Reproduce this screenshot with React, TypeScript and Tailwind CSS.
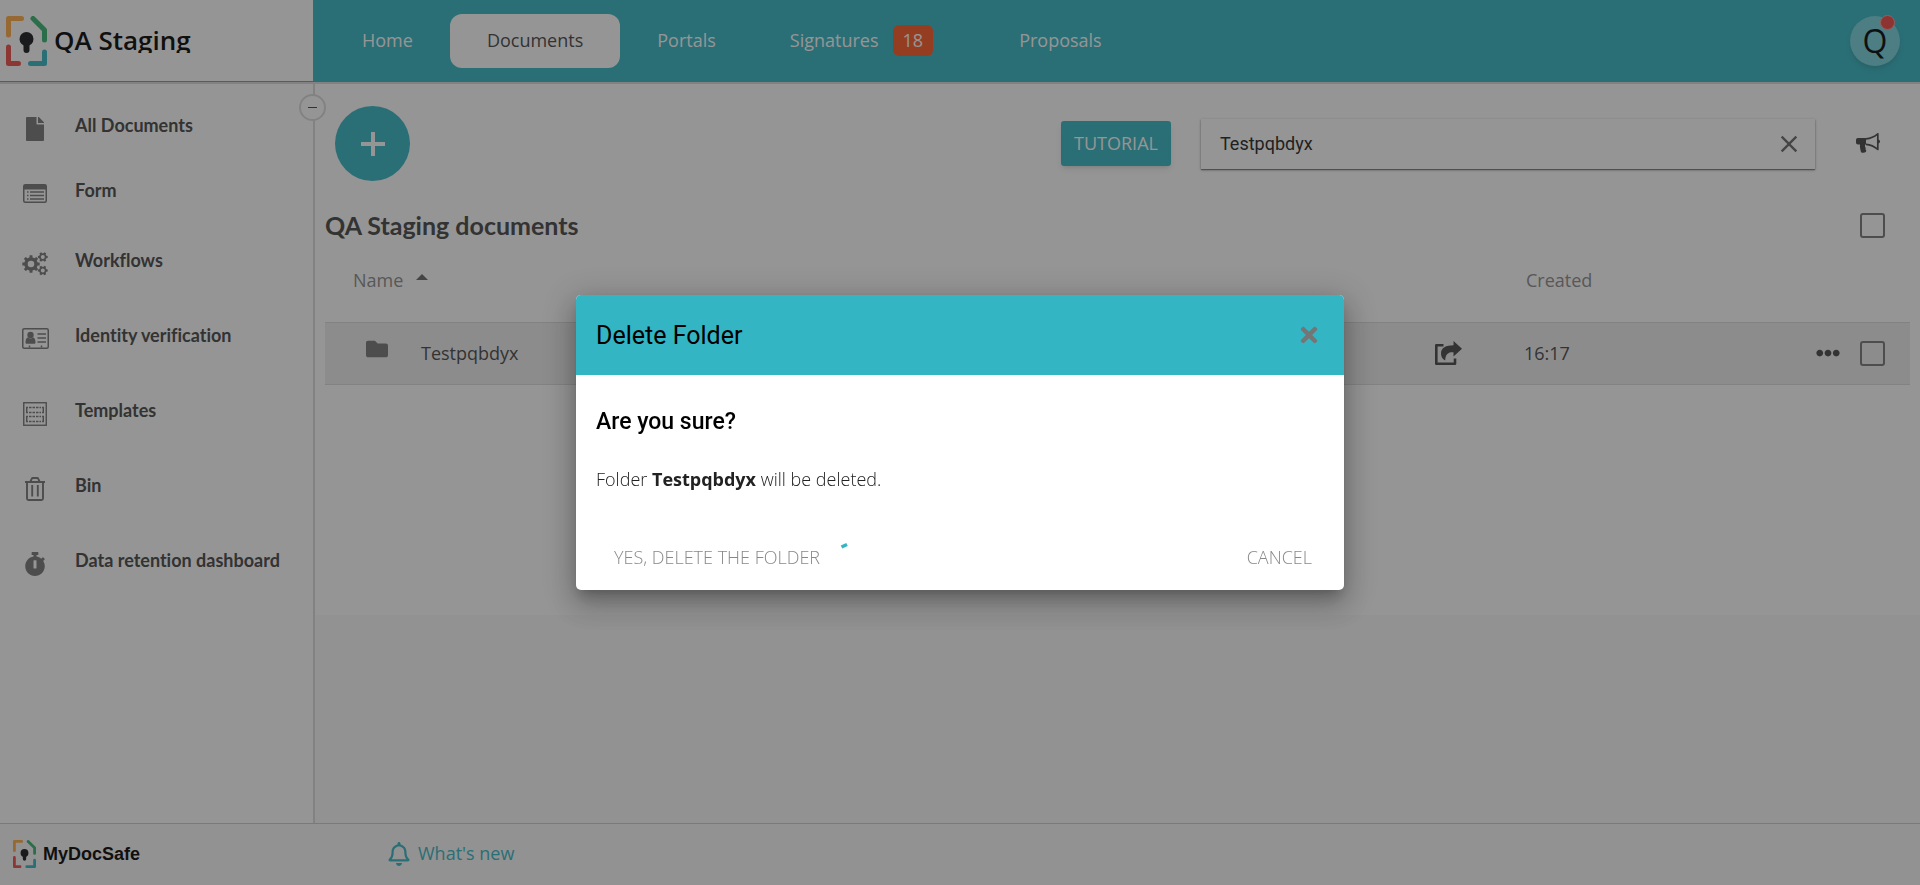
import type { ReactNode } from "react";
import {
  FaEllipsisH,
  FaFile,
  FaFolder,
  FaRegBell,
  FaStopwatch,
  FaTimes,
} from "react-icons/fa";
import { MdClose } from "react-icons/md";

function LogoMark({ className }: { className: string }) {
  return (
    <svg viewBox="0 0 41 50" className={className} fill="none" strokeWidth="5" strokeLinecap="round" strokeLinejoin="round" aria-hidden="true">
      <path d="M2.500 19V2.500H15.500" stroke="#ffab40" />
      <path d="M27 2.500L38.500 14V24" stroke="#36b36f" />
      <path d="M2.500 31V47.500H12.500" stroke="#ef4b46" />
      <path d="M38.500 36V47.500H24.500" stroke="#33b5c3" />
      <circle cx="20.500" cy="23" r="7" fill="#16161c" />
      <path d="M20.500 26V34" stroke="#16161c" strokeWidth="6" />
    </svg>
  );
}

function FormIcon() {
  return (
    <svg viewBox="0 0 24 19" className="w-6" aria-hidden="true">
      <rect x="0.750" y="0.750" width="22.500" height="17.500" rx="1.500" fill="none" stroke="currentColor" strokeWidth="1.500" />
      <path d="M1 1h22v4.500H1z" fill="currentColor" />
      <path d="M4 8h1.500M4 11.500h1.500M4 15h1.500M7 8h14M7 11.500h14M7 15h14" stroke="currentColor" strokeWidth="1.300" />
    </svg>
  );
}

function gearPath(cx: number, cy: number, outer: number, root: number, hole: number, teeth: number) {
  const step = (Math.PI * 2) / teeth;
  const points: string[] = [];
  for (let i = 0; i < teeth; i++) {
    const a = i * step;
    [
      [root, -0.3],
      [outer, -0.2],
      [outer, 0.2],
      [root, 0.3],
    ].forEach(([r, t]) => {
      points.push(`${(cx + r * Math.cos(a + t * step)).toFixed(2)} ${(cy + r * Math.sin(a + t * step)).toFixed(2)}`);
    });
  }
  return `M${points.join("L")}ZM${cx - hole} ${cy}a${hole} ${hole} 0 1 0 ${hole * 2} 0a${hole} ${hole} 0 1 0 ${-hole * 2} 0Z`;
}

function WorkflowsIcon() {
  return (
    <svg viewBox="0 0 26 24" className="w-[26px]" fill="currentColor" fillRule="evenodd" aria-hidden="true">
      <path d={gearPath(9, 12, 8.8, 6.8, 3.3, 8)} />
      <path d={gearPath(20.8, 5, 5, 3.8, 2, 6)} />
      <path d={gearPath(20.8, 18.5, 5, 3.8, 2, 6)} />
    </svg>
  );
}

function IdentityIcon() {
  return (
    <svg viewBox="0 0 27 21" className="w-[27px]" aria-hidden="true">
      <rect x="0.750" y="0.750" width="25.500" height="19.500" rx="1.500" fill="none" stroke="currentColor" strokeWidth="1.500" />
      <circle cx="8.500" cy="7" r="3.200" fill="currentColor" />
      <path d="M3.500 14.500c0-3 1-5 2.500-5 1.500 1.200 3.500 1.200 5 0 1.500 0 2.500 2 2.500 5 0 .8-.6 1.300-1.300 1.300H4.800c-.7 0-1.300-.5-1.300-1.300z" fill="currentColor" />
      <path d="M15.500 6h8.500M15.500 10h8.500M15.500 14h8.500" stroke="currentColor" strokeWidth="1.500" />
      <path d="M7.500 17.500v2M19.500 17.500v2" stroke="currentColor" strokeWidth="1.500" />
    </svg>
  );
}

function TemplatesIcon() {
  return (
    <svg viewBox="0 0 24 24" className="w-6" fill="none" stroke="currentColor" aria-hidden="true">
      <rect x="0.750" y="0.750" width="22.500" height="22.500" strokeWidth="1.400" />
      <path d="M5 5.500H3.700v5H5M19 5.500h1.300v5H19M5 14.500H3.700v5H5M19 14.500h1.300v5H19" strokeWidth="1.400" />
      <path d="M6 5.500h12M6 10.500h12M6 14.500h12M6 19.500h12" strokeWidth="1.400" strokeDasharray="2.500 1" />
    </svg>
  );
}

function BinIcon() {
  return (
    <svg viewBox="0 0 20 24" className="w-5" fill="none" stroke="currentColor" strokeWidth="1.900" aria-hidden="true">
      <path d="M0 5h20M2 5v16.500c0 1 .6 1.500 1.500 1.500h13c.9 0 1.500-.5 1.500-1.500V5" />
      <path d="M5.500 4.500l1.300-2.800c.2-.5.6-.7 1-.7h4.400c.4 0 .8.200 1 .7l1.300 2.800" />
      <path d="M7.200 8v11.500M12.800 8v11.500" />
    </svg>
  );
}

function MegaphoneIcon() {
  return (
    <svg viewBox="0 0 24 21" className="w-6" aria-hidden="true">
      <path d="M2 5h8v6.500h-.8c-.4 1.500-.2 2.600.6 3.500-.5.700-.3 1.500.2 2 .4.600.3 1.200-.3 2-.9.900-3.300 1-4.700.2-.5-2.700-1.400-5-1-7.700H2c-1.200 0-2-.8-2-2V7c0-1.200.8-2 2-2z" fill="currentColor" />
      <path d="M10 5.800c4.500-.4 8.500-2.200 11.800-5v15.600c-3.300-2.800-7.300-4.600-11.800-5" fill="none" stroke="currentColor" strokeWidth="1.700" strokeLinejoin="round" />
      <path d="M22 6.500c1.300.3 2 1 2 2s-.7 1.700-2 2z" fill="currentColor" />
    </svg>
  );
}

function ShareIcon() {
  return (
    <svg viewBox="0 0 27 24" className="w-[27px]" aria-hidden="true">
      <path d="M8.500 4.300H1.300V22.700H20V17.500" fill="none" stroke="currentColor" strokeWidth="2.600" strokeLinejoin="round" />
      <path d="M18.500 0L27 7.700L18.500 15.500V11.200C13.500 11 10.500 12.500 10.200 19.500C7.500 18.200 6 15.500 6 12.500C6 6.500 11 4.300 18.500 4.200Z" fill="currentColor" />
    </svg>
  );
}

const sideItems: { label: string; icon: ReactNode; height: string }[] = [
  { label: "All Documents", icon: <FaFile size={24} />, height: "h-[65px]" },
  { label: "Form", icon: <FormIcon />, height: "h-[65px]" },
  { label: "Workflows", icon: <WorkflowsIcon />, height: "h-[75px]" },
  { label: "Identity verification", icon: <IdentityIcon />, height: "h-[75px]" },
  { label: "Templates", icon: <TemplatesIcon />, height: "h-[75px]" },
  { label: "Bin", icon: <BinIcon />, height: "h-[75px]" },
  { label: "Data retention dashboard", icon: <FaStopwatch size={24} />, height: "h-[75px]" },
];

const navItem = "flex h-[54px] items-center gap-[14px] rounded-xl px-[37px] pb-0.5";
const checkbox = "block size-[25px] appearance-none rounded-[3px] border-2 border-[#757575]";

function Header() {
  return (
    <header className="flex h-[84px] border-b-2 border-[#dbdbdb]">
      <a href="#home" className="flex w-[313px] shrink-0 items-center gap-[7px] border-b border-[#33b5c3] bg-white pl-1.5">
        <LogoMark className="w-[41px]" />
        <span className="h-6 overflow-hidden text-[26px] leading-[22px] font-semibold text-black">QA Staging</span>
      </a>
      <div className="flex grow items-center justify-between bg-[#33b5c3] pr-5 pl-3">
        <nav className="flex items-center text-white">
          <a href="#home" className={navItem}>Home</a>
          <a href="#documents" className={`${navItem} bg-white text-[#444]`}>Documents</a>
          <a href="#portals" className={navItem}>Portals</a>
          <a href="#signatures" className={navItem}>
            Signatures
            <span className="mr-3 rounded-md bg-[#ff5722] px-2.5 py-0.5">18</span>
          </a>
          <a href="#proposals" className={navItem}>Proposals</a>
        </nav>
        <button type="button" aria-label="Account" className="relative flex size-[50px] items-center justify-center rounded-full bg-[#75d3dc] text-[32px] leading-none text-black shadow-md">
          Q
          <span className="absolute -top-px right-[5px] size-[15px] rounded-full border border-[#ff9a94] bg-[#f04440]" />
        </button>
      </div>
    </header>
  );
}

function Sidebar() {
  return (
    <aside className="relative w-[315px] shrink-0 border-r-2 border-[#dbdbdb] bg-white pt-[9px]">
      <button type="button" aria-label="Collapse menu" className="absolute top-[10px] -right-[13px] flex size-[27px] items-center justify-center rounded-full border-2 border-[#dbdbdb] bg-white">
        <span className="h-px w-[9px] bg-[#444]" />
      </button>
      <nav className="font-['Lato',sans-serif] font-bold text-[#444] [font-variant-ligatures:none]">
        {sideItems.map((item) => (
          <a key={item.label} href="#section" className={`flex items-center ${item.height}`}>
            <span className="flex w-[75px] justify-center pt-1.5 pr-[5px] text-[#757575]">{item.icon}</span>
            {item.label}
          </a>
        ))}
      </nav>
    </aside>
  );
}

function Documents() {
  return (
    <main className="grow bg-[#fafafa]">
      <div className="bg-white pt-[22px] pr-2.5 pb-[230px] pl-2.5">
        <div className="flex items-center pr-[30px] pl-2.5">
          <button type="button" aria-label="Add" className="flex size-[75px] items-center justify-center rounded-full bg-[#33b5c3]">
            <svg viewBox="0 0 24 24" className="size-6" stroke="white" strokeWidth="4" aria-hidden="true">
              <path d="M12 0v24M0 12h24" />
            </svg>
          </button>
          <button type="button" className="ml-auto h-[45px] w-[110px] rounded-[3px] bg-[#33b5c3] text-white shadow-md">TUTORIAL</button>
          <div className="ml-[30px] flex h-[50px] w-[614px] items-center bg-white pr-3 pl-[19px] font-['Roboto',sans-serif] shadow-[0_1px_3px_rgba(0,0,0,0.3),0_1px_1px_rgba(0,0,0,0.4)]">
            <input aria-label="Search" defaultValue="Testpqbdyx" className="min-w-0 grow bg-transparent text-lg text-[#212121] outline-none" />
            <button type="button" aria-label="Clear search" className="text-[#666]">
              <MdClose size={28} />
            </button>
          </div>
          <button type="button" aria-label="Announcements" className="ml-[41px] text-[#444]">
            <MegaphoneIcon />
          </button>
        </div>
        <div className="mt-8 mb-0.5 flex h-6 items-center justify-between pr-[25px]">
          <h1 className="font-['Lato',sans-serif] text-[25px] font-bold text-[#444]">QA Staging documents</h1>
          <input type="checkbox" aria-label="Select all" className={checkbox} />
        </div>
        <table className="w-full table-fixed border-collapse text-left">
          <colgroup>
            <col className="w-24" />
            <col />
            <col className="w-[89px]" />
            <col className="w-[260px]" />
            <col className="w-[126px]" />
          </colgroup>
          <thead className="text-[#8a8a8a]">
            <tr className="h-[83px]">
              <th className="pl-7 font-normal whitespace-nowrap" colSpan={2}>
                <button type="button" className="flex items-center gap-[13px]">
                  Name
                  <svg viewBox="0 0 12 6" className="mb-1.5 w-3" fill="#666" aria-hidden="true">
                    <path d="M6 0l6 6H0z" />
                  </svg>
                </button>
              </th>
              <th />
              <th className="pl-0.5 font-normal">Created</th>
              <th />
            </tr>
          </thead>
          <tbody>
            <tr className="h-[62px] border-y border-[#dbdbdb] bg-[#eee] text-[#444]">
              <td className="pl-[41px] text-[#757575]">
                <FaFolder size={22} className="-mt-2" />
              </td>
              <td>Testpqbdyx</td>
              <td>
                <button type="button" aria-label="Share" className="block">
                  <ShareIcon />
                </button>
              </td>
              <td>16:17</td>
              <td>
                <div className="flex items-center justify-end gap-5 pr-[25px]">
                  <button type="button" aria-label="More actions">
                    <FaEllipsisH size={24} />
                  </button>
                  <input type="checkbox" aria-label="Select Testpqbdyx" className={checkbox} />
                </div>
              </td>
            </tr>
          </tbody>
        </table>
      </div>
    </main>
  );
}

function Footer() {
  return (
    <footer className="flex h-[62px] items-center border-t border-[#ccc] bg-[#fafafa]">
      <a href="#home" className="flex w-[387px] items-center gap-[7px] pl-[13px] font-['Liberation_Sans',sans-serif] text-lg font-bold text-black">
        <LogoMark className="w-[23px]" />
        MyDocSafe
      </a>
      <a href="#news" className="flex items-center gap-[7px] pb-0.5 text-[#33b5c3]">
        <FaRegBell size={24} />
        What's new
      </a>
    </footer>
  );
}

function DeleteDialog() {
  return (
    <div className="fixed inset-0 flex items-center justify-center bg-[#212121]/48">
      <div
        role="dialog"
        aria-modal="true"
        aria-labelledby="dialog-title"
        className="w-2/5 overflow-hidden rounded-[5px] bg-white shadow-[0_8px_10px_-5px_rgba(0,0,0,0.2),0_16px_24px_2px_rgba(0,0,0,0.14),0_6px_30px_5px_rgba(0,0,0,0.2)]"
      >
        <div className="flex h-20 items-center justify-between bg-[#33b5c3] pr-[23px] pl-5">
          <h2 id="dialog-title" className="font-['Roboto',sans-serif] text-[25px] text-black">Delete Folder</h2>
          <button type="button" aria-label="Close" className="text-[#757575]">
            <FaTimes size={24} />
          </button>
        </div>
        <div className="px-5 pt-8">
          <h3 className="font-['Roboto',sans-serif] text-[23px] leading-[30px] font-medium text-black">Are you sure?</h3>
          <p className="mt-[29px] font-light text-[#222]">
            Folder <b className="font-bold">Testpqbdyx</b> will be deleted.
          </p>
        </div>
        <div className="mt-[42px] mb-2.5 flex h-[45px] items-center pr-8 pl-[38px] font-light text-[#888]">
          <button type="button" disabled>YES, DELETE THE FOLDER</button>
          <svg viewBox="0 0 24 24" className="ml-[21px] size-6 overflow-visible text-[#33b5c3]" fill="none" aria-label="Loading">
            <path d="M0.500 1L6 -1.500" stroke="currentColor" strokeWidth="3.500" />
          </svg>
          <button type="button" className="ml-auto" disabled>CANCEL</button>
        </div>
      </div>
    </div>
  );
}

export default function App() {
  return (
    <div className="flex min-h-screen flex-col bg-white font-['Open_Sans',sans-serif] text-lg leading-[27px]">
      <Header />
      <div className="flex grow">
        <Sidebar />
        <Documents />
      </div>
      <Footer />
      <DeleteDialog />
    </div>
  );
}
